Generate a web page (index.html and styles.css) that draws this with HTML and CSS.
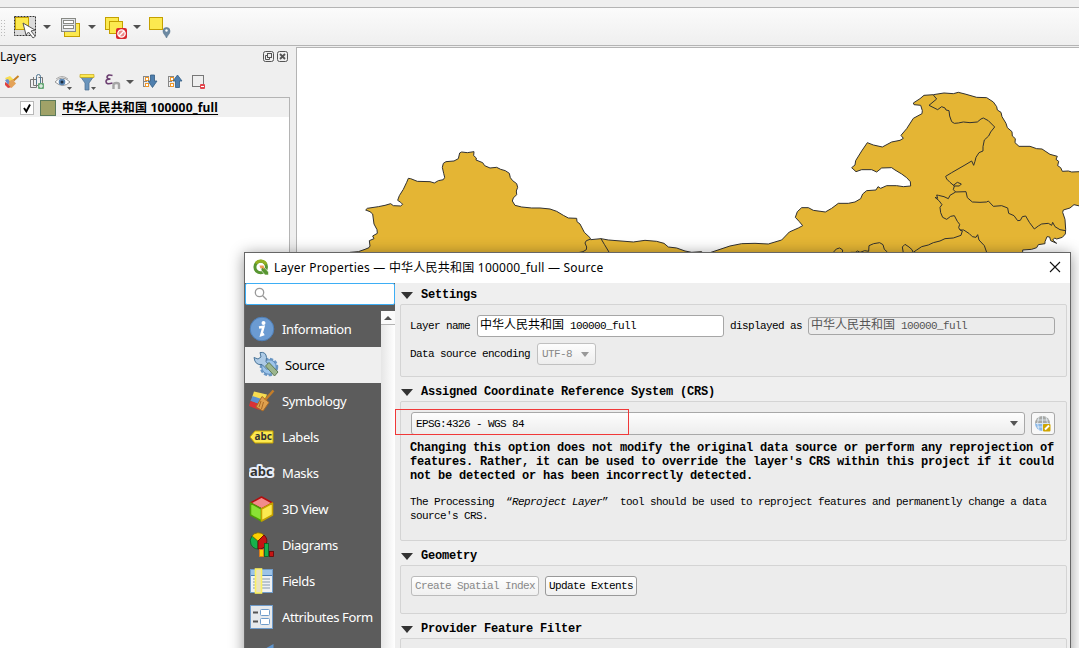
FILE: index.html
```html
<!DOCTYPE html>
<html lang="en">
<head>
<meta charset="utf-8">
<title>QGIS</title>
<link rel="stylesheet" href="styles.css">
</head>
<body>
<div class="app">
  <div class="menubar"></div>
  <div class="toolbar">
    <span class="grip"></span>
    <svg class="tool select" width="24" height="24" viewBox="0 0 24 24">
      <rect x="1.500" y="1.500" width="21" height="19" fill="#dcdcdc" stroke="#333" stroke-dasharray="2 1"/>
      <rect x="2.500" y="2.500" width="13" height="12" fill="#fce94f" stroke="#c4a000"/>
      <path d="M10 8l3 12 2.500-3 4.500 6 2.300-1.700-4.300-5.300 4-1z" fill="#fff" stroke="#555"/>
    </svg>
    <span class="caret c1"></span>
    <svg class="tool form" width="22" height="22" viewBox="0 0 22 22">
      <rect x="4.500" y="6.500" width="15" height="13" fill="#fce94f" stroke="#c4a000"/>
      <rect x="1.500" y="1.500" width="14" height="13" fill="#e2e5e8" stroke="#888a85"/>
      <rect x="3.500" y="3.500" width="10" height="3" fill="#fff" stroke="#888a85"/>
      <rect x="3.500" y="8.500" width="10" height="3" fill="#fff" stroke="#888a85"/>
    </svg>
    <span class="caret c2"></span>
    <svg class="tool deselect" width="24" height="24" viewBox="0 0 24 24">
      <rect x="1.500" y="1.500" width="13" height="12" fill="#fce94f" stroke="#c4a000"/>
      <rect x="5.500" y="5.500" width="13" height="12" fill="#fce94f" stroke="#c4a000"/>
      <rect x="12" y="12" width="11" height="11" rx="2" fill="#d9282f"/>
      <circle cx="17.500" cy="17.500" r="3.700" fill="#e88" stroke="#fff" stroke-width="1.300"/>
      <path d="M15 20l5-5" stroke="#fff" stroke-width="1.400"/>
    </svg>
    <span class="caret c3"></span>
    <svg class="tool locate" width="24" height="24" viewBox="0 0 24 24">
      <rect x="1.500" y="1.500" width="13" height="12" fill="#fce94f" stroke="#c4a000"/>
      <path d="M18.500 22c-1-3-3.500-4-3.500-7a3.500 3.500 0 0 1 7 0c0 3-2.500 4-3.500 7z" fill="#6d8aa3" stroke="#56728c" stroke-width=".6"/>
      <circle cx="18.500" cy="14.500" r="1.200" fill="#fff"/>
    </svg>
  </div>

  <div class="workspace">
    <aside class="layers">
      <div class="layers-title"><span>Layers</span>
        <svg width="26" height="12" viewBox="0 0 26 12" fill="none" stroke="#555">
          <rect x=".500" y=".500" width="10" height="10" rx="2"/><rect x="4.500" y="2.500" width="4" height="4"/><path d="M4.500 4.500h-2v4h4v-2"/>
          <rect x="14.500" y=".500" width="10" height="10" rx="2"/><path d="M17 3l5 5M22 3l-5 5" stroke-width="1.800"/>
        </svg>
      </div>
      <div class="layers-tools">
        <svg width="200" height="18" viewBox="5 0 200 18" fill="none">
          <path d="M5 5l5-2 4 4-5 4z" fill="#f7dc50"/><path d="M5 7l3-1 3 4-3 2z" fill="#6b8fcf"/><path d="M5 9l3 2 4 3-4 1-3-3z" fill="#e0403c"/><path d="M9.500 8l3-1.500 3.500 4-4.500 4.500-3-3z" fill="#e3a258"/><path d="M13.500 7.500l5-4.500" stroke="#c98324" stroke-width="2"/>
          <path d="M30.500 6.500h6v8h-6zM33.500 4v8.500h7M38.500 4.500h4v7" stroke="#777"/><path d="M36.500 11V3.500a2 2 0 0 1 4 0V10" stroke="#4f7590"/><rect x="38" y="10" width="6" height="6" rx="1" fill="#68a878"/><path d="M41 11v4M39 13h4" stroke="#fff"/>
          <path d="M55 9q7-8 15 0-7 7-15 0z" fill="#fff" stroke="#999"/><path d="M56 6q6-5 12 0" stroke="#aaa"/><circle cx="62" cy="9" r="3.300" fill="#5a86b5"/><circle cx="62" cy="9" r="1.500" fill="#203040"/><path d="M67 14h5l-2.500 3z" fill="#555"/>
          <path d="M80 3h14l-5 7v7h-4v-7z" fill="#6a95bd" stroke="#486c8c" stroke-width=".7"/><path d="M80 1.500h14v3H80z" fill="#fce94f" stroke="#c4a000" stroke-width=".6"/><path d="M91 14h5l-2.500 3z" fill="#555"/>
          <path d="M112.500 2.500q-5-1.500-5.500 1.500 0 2 3.500 2-4.500 0-4.500 2.500 0 3.500 6.500 1.500" stroke="#6c3f71" stroke-width="1.600"/><path d="M113.500 16v-4q0-2 3-2t2.500 2v4" stroke="#a5a5a5" stroke-width="2.400"/><path d="M126 7h8l-4 4z" fill="#555"/>
          <path d="M143.500 3v11M143 3.500h6M143 8.500h4M143 13.500h4" stroke="#888"/><rect x="145.500" y="4.500" width="3" height="3" fill="#fff" stroke="#ef9729"/><rect x="145.500" y="10.500" width="3" height="3" fill="#fff" stroke="#ef9729"/><path d="M150.500 2h4v6h2.500l-4.500 6.500-4.500-6.500h2.500z" fill="#4f7fae" stroke="#345d83" stroke-width=".8"/>
          <path d="M168.500 3v11M168 3.500h6M168 8.500h4M168 13.500h4" stroke="#888"/><rect x="170.500" y="4.500" width="3" height="3" fill="#fff" stroke="#ef9729"/><rect x="170.500" y="10.500" width="3" height="3" fill="#fff" stroke="#ef9729"/><path d="M175.500 14.500h4V8h2.500l-4.500-6-4.500 6h2.500z" fill="#4f7fae" stroke="#345d83" stroke-width=".8"/>
          <rect x="192.500" y="2.500" width="11" height="11" stroke="#777"/><rect x="200" y="11" width="5" height="5" rx="1" fill="#e2454d"/><path d="M201 13.500h3" stroke="#fff"/>
        </svg>
      </div>
      <div class="tree">
        <div class="tree-row">
          <svg class="check" width="14" height="14" viewBox="0 0 14 14"><rect x=".5" y=".5" width="13" height="13" fill="#fff" stroke="#b8b8b8"/><path d="M4 7l2.300 3.500L10 3.500" fill="none" stroke="#000" stroke-width="1.900"/></svg>
          <span class="swatch"></span>
          <span class="layer-name">中华人民共和国 100000_full</span>
        </div>
      </div>
    </aside>
    <div class="canvas">
      <svg width="782" height="600" viewBox="297 48 782 600">
        <g transform="translate(350 80) scale(.33333)" fill="#e4b534" stroke="#303030" stroke-width="3" stroke-linejoin="round">
          <path d="M0 517 25 515 45 508 57 503 60 498 58 482 72 476 68 468 82 460 81 449 72 432 68 402 60 395 47 390 52 385 85 380 105 376 122 371 130 377 152 378 158 373 152 367 143 361 148 347 160 328 170 307 175 295 182 296 202 304 240 305 253 309 265 302 280 299 284 292 281 280 277 262 280 250 288 245 312 243 325 236 329 219 335 216 352 218 372 215 371 227 379 234 378 240 398 248 404 257 420 264 440 262 452 268 466 272 478 280 481 293 488 302 500 311 503 322 499 333 500 344 490 354 487 363 495 376 515 381 545 384 570 384 600 387 620 394 640 406 655 414 680 415 681 425 690 432 703 457 720 473 722 479 753 476 775 480 850 486 885 481 920 484 942 490 955 501 980 504 1005 513 1025 517 1055 515 1055 560 0 560z"/>
          <path fill="none" d="M720 478l-11 4-4 7 5 12-1 8-10 6-14 3M753 476l10 17 15 25"/>
        </g>
        <g transform="translate(720 80) scale(.33333)" fill="#e4b534" stroke="#303030" stroke-width="3" stroke-linejoin="round">
          <path d="M-30 518 0 508 30 498 65 491 105 490 145 492 165 486 185 480 208 456 235 444 248 437 238 425 226 412 232 395 245 383 265 383 280 391 316 396 335 385 355 370 385 370 405 366 422 356 428 342 440 332 468 330 474 320 482 325 500 317 530 317 550 320 572 318 571 305 560 293 545 282 525 270 515 263 485 264 470 276 455 269 425 269 408 275 395 263 405 255 407 242 425 213 442 188 460 195 487 201 515 186 540 181 550 175 543 166 560 146 580 115 606 101 607 92 602 76 582 74 580 69 600 56 612 46 640 44 672 39 700 41 715 37 735 42 770 52 800 53 820 66 830 80 832 90 843 97 846 110 858 130 862 143 876 155 877 168 886 176 885 188 897 199 930 199 950 206 966 207 990 223 1012 229 1008 238 1016 244 1013 257 1022 263 1027 274 1045 273 1055 276 1079 275 1100 275 1100 378 1079 378 1062 374 1050 384 1030 390 1028 397 1035 418 1037 448 1036 462 1027 472 1010 477 1004 474 998 480 1010 490 992 482 989 471 981 470 975 485 975 491 955 494 950 503 935 508 908 510 908 540-30 540z"/>
          <path fill="none" d="M640 45 650 57 627 76 653 89 665 80 675 84 678 90 687 92 689 108 695 125 703 130 715 129 730 126 750 128 772 126 783 117 790 114 805 122 824 141 812 156 806 168 793 180 789 200 789 213 777 218 768 232 765 244 761 256 755 243 735 255 695 278 677 289 680 297 690 307 703 318 700 329 707 336 738 335 742 353 757 366 780 367 800 366 805 363 820 379 845 377 863 384 866 400 882 407 893 422 901 421 907 410 917 408 928 427 943 447 955 438 965 432 985 430 995 436 998 427 1005 440 1020 449 1037 452"/>
          <path fill="none" d="M700 316 712 307 724 312 718 318 702 318M707 336 690 346 685 356 672 350 655 346 650 345 653 355 645 352 657 362 666 374 660 382 662 398 668 412 680 418 692 409 703 407 712 424 719 433 716 443 720 450 727 453 723 466 700 474 675 476 660 483 640 488 625 495 605 500 590 510 580 517M720 450 731 450 748 461 757 470 768 472 773 464 777 480 793 497 800 517M340 517l9-10 10-3 9 6-1 8M392 517l14 0 7-4 7 4 14-5 12 2 1-17 14-6 18-3 10 6 4 14 9 8 3 8M550 519l-3-18 8-8 12 8 9 8 4 10"/>
        </g>
      </svg>
    </div>
  </div>

  <section class="dialog">
    <header class="titlebar">
      <svg width="17" height="17" viewBox="0 0 17 17"><circle cx="7.700" cy="8" r="5.800" fill="none" stroke="#589632" stroke-width="3"/><path d="M3 4.500a5.800 5.800 0 0 1 10 1" fill="none" stroke="#93b023" stroke-width="3"/><path d="M8.500 8.500l2-1 5 5.500v3h-3.500l-4-5z" fill="#589632" stroke="#fff" stroke-width=".6"/><path d="M6.500 6.500h4l1 4-2-1.500-2 .5z" fill="#ee9a53"/></svg>
      <span class="title">Layer Properties — 中华人民共和国 100000_full — Source</span>
      <svg class="close" width="12" height="12" viewBox="0 0 12 12"><path d="M1 1l10 10M11 1L1 11" stroke="#111" stroke-width="1.100"/></svg>
    </header>
    <div class="dialog-body">
      <nav class="side">
        <div class="search"><svg width="14" height="14" viewBox="0 0 14 14" fill="none" stroke="#999" stroke-width="1.300"><circle cx="5.500" cy="5.500" r="4.200"/><path d="M8.700 8.700l4 4"/></svg></div>
        <div class="side-main">
          <ul class="pages">
            <li><svg width="26" height="26" viewBox="0 0 26 26"><circle cx="13" cy="13" r="11.800" fill="#6b9bd2" stroke="#4e7fb8"/><circle cx="14.500" cy="7" r="2" fill="#fff"/><path d="M10 11.500l4.500-.8-2.300 8.500 3-1" fill="none" stroke="#fff" stroke-width="2.400"/></svg><span>Information</span></li>
            <li class="active"><svg width="28" height="28" viewBox="0 0 28 28"><circle cx="17" cy="16" r="8" fill="#9cc4ea" stroke="#6a97c4" stroke-width="2.500" stroke-dasharray="3.200 1.600"/><circle cx="17" cy="16" r="7.200" fill="#9cc4ea" stroke="#5b87b5" stroke-width=".8"/><path d="M2 6.500l4 1.500 3-2-1-4.500q6-1 6.500 5l-.5 4 4 5-3 3-5-5q-7 1-8-7z" fill="#aecbe6" stroke="#4b7599"/><path d="M13.500 15l3.500-3.500 9 9.500-3.500 4z" fill="#9cb68e" stroke="#5e7a55"/></svg><span>Source</span></li>
            <li><svg width="26" height="26" viewBox="0 0 26 26"><path d="M5 3.500l13 3-3 7-12-4z" fill="#f7dc50"/><path d="M3.500 8l9 3-2 6-9-4z" fill="#5b8fd0"/><path d="M1.500 13l9 3 0 6-10.500-4z" fill="#d93236"/><path d="M13 8.500l7 6-6 8.500-7-4z" fill="#dfa04e" stroke="#a96925"/><path d="M16 12l8.500-9.500" stroke="#c47d28" stroke-width="2.500"/><path d="M12 13l-2 6M14.500 14l-2 7" stroke="#a96925"/></svg><span>Symbology</span></li>
            <li><svg width="26" height="26" viewBox="0 0 26 26"><path d="M1 13l5-6h18v12H6z" fill="#fce94f" stroke="#c4a000"/><text x="5.500" y="16" class="abc-small">abc</text></svg><span>Labels</span></li>
            <li><svg width="28" height="26" viewBox="0 0 28 26"><text x="1" y="16" class="abc">abc</text></svg><span>Masks</span></li>
            <li><svg width="26" height="26" viewBox="0 0 26 26" stroke-linejoin="round"><path d="M12.500 1l11 6-11 6-11-6z" fill="#f28b8b" stroke="#b30e0e" stroke-width="1.500"/><path d="M1.500 7l11 6v12l-11-6z" fill="#8ae234" stroke="#4e9a06" stroke-width="1.500"/><path d="M23.500 7v12l-11 6V13z" fill="#fce94f" stroke="#c4a000" stroke-width="1.500"/></svg><span>3D View</span></li>
            <li><svg width="26" height="26" viewBox="0 0 26 26" stroke-width=".8"><path d="M9 9V17A8 8 0 0 1 3 4z" fill="#17b14b" stroke="#075e23"/><path d="M9 9L3 4a8 8 0 0 1 12-1z" fill="#fccf03" stroke="#806b00"/><path d="M9 9l6-6a8 8 0 0 1-6 14z" fill="#c51414" stroke="#650404"/><rect x="10.500" y="17.500" width="4" height="7" fill="#fccf03" stroke="#e67817"/><rect x="15.500" y="11.500" width="4" height="13" fill="#17b14b" stroke="#075e23"/><rect x="20.500" y="19.500" width="4" height="5" fill="#c51414" stroke="#650404"/></svg><span>Diagrams</span></li>
            <li><svg width="26" height="26" viewBox="0 0 26 26"><rect x="1.500" y="1.500" width="22" height="23" fill="#eef1f4" stroke="#6f9ccb"/><path d="M2 2h21v5H2z" fill="#9cc3e8"/><path d="M2 7.500h21" stroke="#4a7fb8"/><path d="M4 11h17M4 14h17M4 17h17M4 20h17" stroke="#8799aa"/><rect x="6.500" y="1" width="6" height="24" fill="#eae3c0" stroke="#fcf05f" stroke-width="1.600"/></svg><span>Fields</span></li>
            <li><svg width="26" height="26" viewBox="0 0 26 26"><rect x="1.500" y="1.500" width="22" height="23" fill="#e6e9ec" stroke="#6f9ccb"/><rect x="11.500" y="5.500" width="9" height="6" rx="1" fill="#fff" stroke="#6f9ccb"/><rect x="11.500" y="14.500" width="9" height="6" rx="1" fill="#fff" stroke="#6f9ccb"/><path d="M4 8.500h5M4 17.500h5" stroke="#555" stroke-width="2"/></svg><span>Attributes Form</span></li>
            <li><svg width="26" height="26" viewBox="0 0 26 26"><path d="M12 11L24.500 4v18z" fill="#5d93cc"/></svg></li>
          </ul>
          <div class="scroll"><div class="scroll-up"><span></span></div></div>
        </div>
      </nav>
      <main class="pane">
        <h3 class="first"><i></i>Settings</h3>
        <div class="group g1">
          <div class="row"><label>Layer name</label><div class="input name"><span class="cjk">中华人民共和国</span>100000_full</div><label>displayed as</label><div class="input shown"><span class="cjk">中华人民共和国</span>100000_full</div></div>
          <div class="row enc"><label>Data source encoding</label><div class="combo small">UTF-8<b></b></div></div>
        </div>
        <h3><i></i>Assigned Coordinate Reference System (CRS)</h3>
        <div class="group g2">
          <div class="row crs"><div class="combo wide">EPSG:4326 - WGS 84<b></b></div>
            <div class="crs-button"><svg width="18" height="18" viewBox="0 0 18 18"><path d="M1 8.500a7.500 7.500 0 0 1 15 0z" fill="#a6a8a5"/><path d="M1 8.500a7.500 7.500 0 0 0 15 0z" fill="#8bb9e8"/><path d="M3 5h11M2 8.500h13M3 12h11M8.500 1v15M5 2q-3 6 0 13M12 2q3 6 0 13" fill="none" stroke="#e5edf5" stroke-width=".8"/><rect x="9" y="9" width="7.500" height="7.500" rx="1" fill="#cfa500"/><path d="M11 14.500l4-4" stroke="#fff" stroke-width="2"/></svg></div>
          </div>
          <p class="warn">Changing this option does not modify the original data source or perform any reprojection of<br>features. Rather, it can be used to override the layer's CRS within this project if it could<br>not be detected or has been incorrectly detected.</p>
          <p class="note">The Processing <span class="q open">“</span><em>Reproject Layer</em><span class="q">”</span> tool should be used to reproject features and permanently change a data<br>source's CRS.</p>
        </div>
        <h3><i></i>Geometry</h3>
        <div class="group g3"><div class="btn off">Create Spatial Index</div><div class="btn">Update Extents</div></div>
        <h3><i></i>Provider Feature Filter</h3>
        <div class="group g4"></div>
      </main>
    </div>
    <div class="highlight"></div>
  </section>
</div>
</body>
</html>
```
FILE: styles.css
```css
* { box-sizing: border-box; }
body { margin: 0; font: 12px "Noto Sans", "Noto Sans CJK SC", sans-serif; color: #000; }
svg { display: block; flex: none; }
.app { position: relative; width: 1079px; height: 648px; overflow: hidden; background: #efefef; display: flex; flex-direction: column; }
.menubar { height: 8px; flex: none; border-bottom: 1px solid #b4b4b4; }
.toolbar { height: 38px; flex: none; display: flex; align-items: flex-start; padding-top: 7px; background: linear-gradient(#fbfbfb, #efefef); border-bottom: 1px solid #b4b4b4; }
.grip { width: 5px; height: 17px; margin: 4px 8px 0 0; background: radial-gradient(circle, #bbb 0.6px, transparent 0.9px) 0 0 / 3px 3px; }
.caret { width: 0; border: 4px solid transparent; border-top-color: #505050; border-bottom: 0; margin-top: 10px; }
.c1 { margin-left: 6px; margin-right: 15px; }
.c2 { margin-left: 6px; margin-right: 8px; }
.c3 { margin-left: 5px; margin-right: 7px; }
.form { margin-left: -6px; margin-top: 2px; }
.deselect, .locate { margin-top: 1px; }

.workspace { flex: 1; display: flex; min-height: 0; }
.layers { width: 290px; display: flex; flex-direction: column; flex: none; }
.layers-title { height: 23px; display: flex; align-items: center; justify-content: space-between; padding: 0 1px 2px 0; font-size: 12px; }
.layers-tools { height: 28px; padding: 4px 0 0 5px; }
.tree { flex: 1; background: #fff; border: 1px solid #b4b4b4; border-left: 0; border-bottom: 0; }
.tree-row { height: 19px; background: #f0f0f0; display: flex; align-items: center; padding-left: 20px; }
.swatch { width: 16px; height: 16px; margin: 0 6px; background: #a0a268; border: 1px solid #5a7a5a; }
.layer-name { font-weight: 700; font-size: 12px; line-height: 17px; letter-spacing: 0.17px; text-decoration: underline; text-underline-offset: 2px; white-space: nowrap; }
.canvas { flex: 1; margin: 1px 0 0 6px; background: #fff; border: 1px solid #b4b4b4; border-width: 1px 0 0 1px; overflow: hidden; }

.dialog { position: absolute; left: 244px; top: 252px; width: 827px; height: 420px; background: #efefef; border: 1px solid #666; box-shadow: 0 2px 14px rgba(0, 0, 0, .42); }
.titlebar { height: 30px; background: #fff; display: flex; align-items: center; padding: 0 9px 2px 8px; }
.title { margin-left: 4px; flex: 1; white-space: nowrap; font-size: 12px; letter-spacing: 0.23px; }
.dialog-body { display: flex; height: 390px; }
.side { width: 150px; flex: none; background: #5c5c5c; }
.search { height: 22px; background: #fff; border: 1px solid #3daef5; border-radius: 2px; padding: 3px 8px; }
.side-main { display: flex; margin-top: 6px; }
.pages { width: 136px; margin: 0; padding: 0; list-style: none; color: #fff; font-size: 13px; letter-spacing: -0.37px; }
.pages li { height: 36px; display: flex; align-items: center; padding-left: 4px; white-space: nowrap; }
.pages li span { margin-left: 7px; }
.pages li:nth-child(5) svg { margin-right: -2px; }
.pages .active { background: #efefef; color: #000; padding-left: 7px; }
.pages .active span { margin-left: 5px; }
.abc-small { font: bold 10px "Noto Sans", sans-serif; fill: #333; letter-spacing: 0; }
.abc { font: bold 13px "Noto Sans", sans-serif; fill: #333; stroke: #e8eefa; stroke-width: 4px; paint-order: stroke; stroke-linejoin: round; letter-spacing: 0; }
.scroll { width: 14px; height: 360px; background: linear-gradient(90deg, #e6e6e6, #fff); }
.scroll-up { height: 14px; background: #fafafa; border-bottom: 1px solid #b4b4b4; display: flex; justify-content: center; align-items: center; }
.scroll-up span { border: 4px solid transparent; border-bottom-color: #505050; border-top: 0; }

.pane { flex: 1; padding: 0 3px 0 5px; font: 11px/14px "Liberation Mono", "Noto Sans CJK SC", monospace; letter-spacing: -0.6px; white-space: nowrap; }
.pane h3 { margin: 0; height: 24px; padding: 5px 0 0 1px; display: flex; align-items: center; font-size: 12px; letter-spacing: -0.2px; }
.pane h3.first { height: 21px; padding-top: 2px; }
.pane h3 i { border: 6px solid transparent; border-top: 7px solid #333; border-bottom: 0; margin: 1px 8px 0 0; }
.group { background: #ececec; border: 1px solid #d4d4d4; border-radius: 2px; padding: 0 11px 0 9px; }
.row { display: flex; align-items: center; }
.g1 { height: 73px; padding-top: 10px; }
.row label { flex: none; }
.input { width: 247px; border: 1px solid #a6a6a6; border-radius: 3px; padding-left: 2px; display: flex; align-items: center; }
.cjk { font-size: 12px; letter-spacing: 0; margin-right: 6px; }
.name { height: 22px; background: #fff; margin: 0 6px 0 7px; }
.shown { height: 18px; margin-left: 6px; color: #555; }
.enc { margin-top: 6px; }
.combo { display: flex; align-items: center; justify-content: space-between; border: 1px solid #a8a8a8; border-radius: 3px; background: linear-gradient(#fdfdfd, #ededed); padding: 0 6px 0 4px; }
.combo b { border: 4px solid transparent; border-top: 5px solid #555; border-bottom: 0; }
.small { width: 59px; height: 22px; margin-left: 7px; color: #888; border-color: #c0c0c0; }
.small b { border-top-color: #999; }
.g2 { height: 140px; padding-top: 10px; }
.crs { gap: 6px; padding-left: 1px; }
.wide { flex: 1; height: 23px; }
.crs-button { width: 24px; height: 23px; border: 1px solid #a8a8a8; border-radius: 3px; background: #f8f8f8; padding: 2px; }
.warn { margin: 6px 0 0; font-weight: 700; font-size: 12px; letter-spacing: -0.2px; }
.note { margin: 12px 0 0; }
.q { display: inline-block; width: 12px; }
.open { text-align: right; }
.g3 { height: 49px; padding: 10px; display: flex; gap: 6px; align-items: flex-start; }
.btn { height: 20px; border: 1px solid #999; border-radius: 3px; background: linear-gradient(#fff, #f0f0f0); padding: 2px 3px; width: 92px; }
.btn.off { width: 128px; color: #888; border-color: #bbb; }
.g4 { height: 40px; }
.highlight { position: absolute; left: 150px; top: 156px; width: 234px; height: 26px; border: 1px solid #f03838; }
```
